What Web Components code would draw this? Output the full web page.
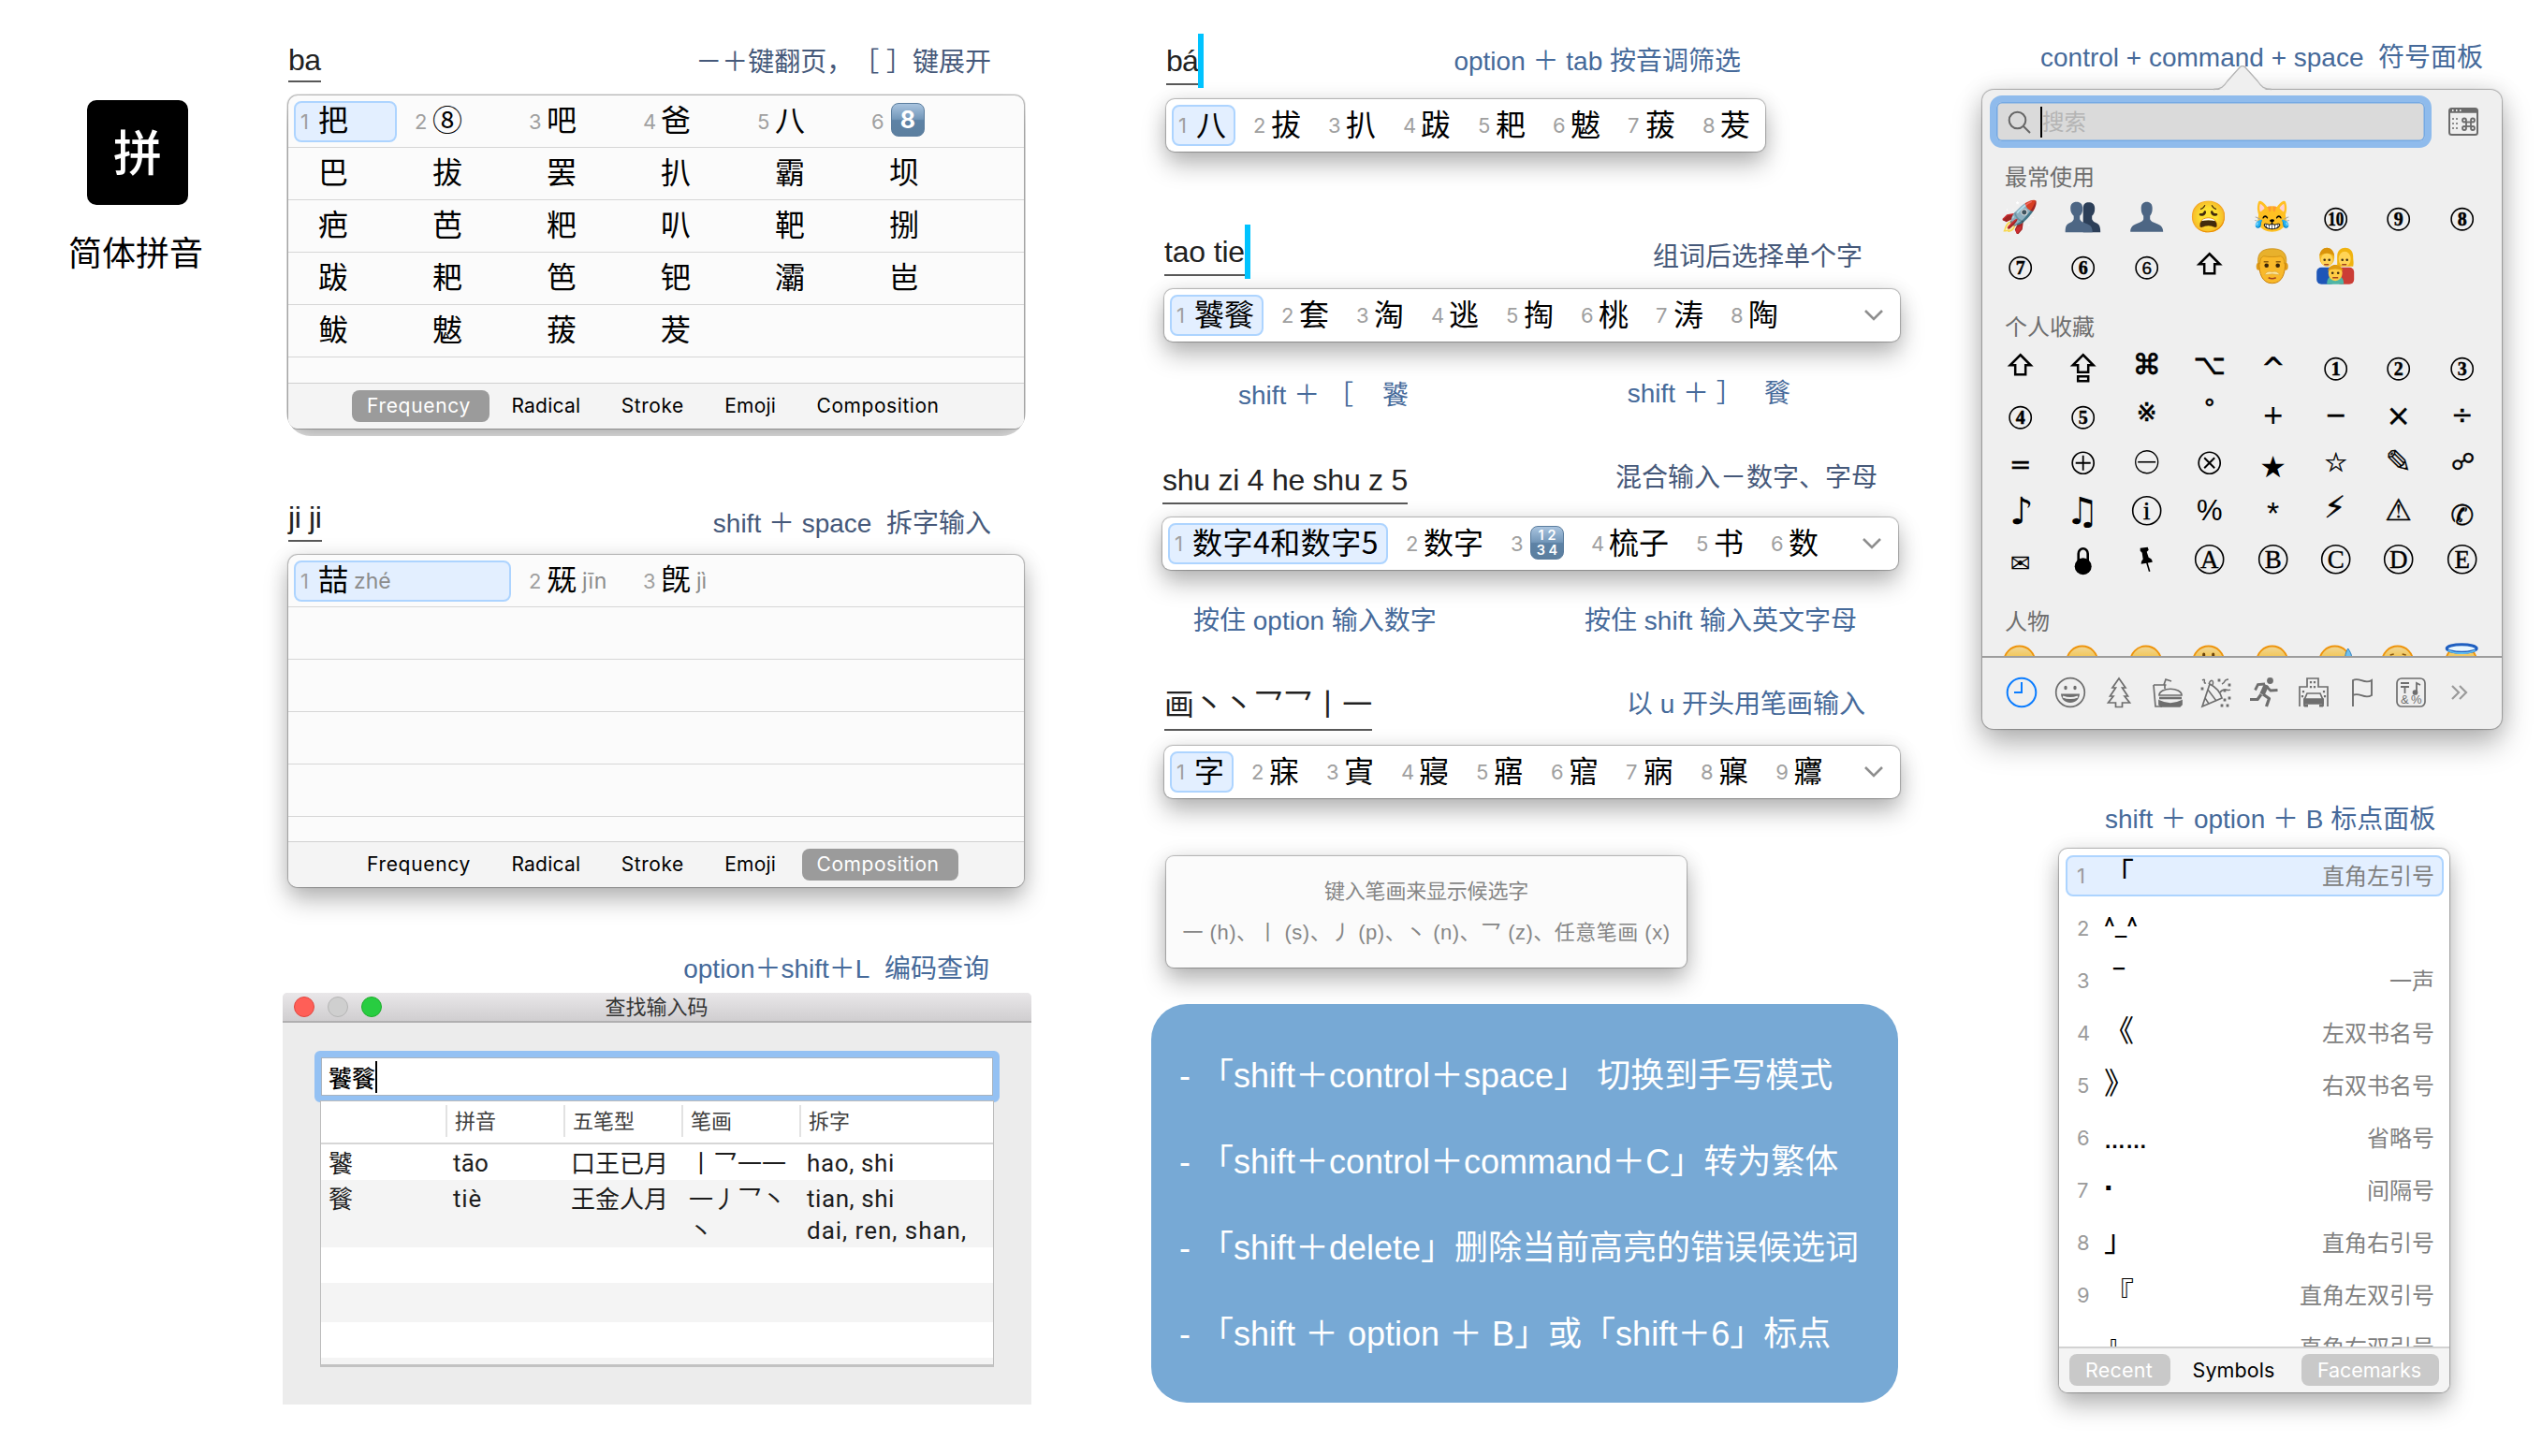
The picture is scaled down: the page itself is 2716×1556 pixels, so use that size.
<!doctype html>
<html lang="zh-CN">
<head>
<meta charset="utf-8">
<title>简体拼音</title>
<style>
html,body{margin:0;background:#fff}
body{width:2716px;height:1556px;overflow:hidden;font-family:"Liberation Sans","Noto Sans CJK SC",sans-serif;text-spacing-trim:space-all;font-kerning:none}
</style>
</head>
<body>
<cheat-sheet></cheat-sheet>
<script>
const CJK='"Noto Sans CJK SC",sans-serif';
const UI='Inter,"Noto Sans CJK SC",sans-serif';

class Base extends HTMLElement{
  connectedCallback(){
    if(this.shadowRoot) return;
    this.attachShadow({mode:'open'}).innerHTML=this.view();
    this.ready&&this.ready();
  }
  a(n,d=''){return this.hasAttribute(n)?this.getAttribute(n):d}
}
const def=(n,c)=>customElements.define(n,c);

/* Text line whose tracking adapts to the width given in w */
class TxLine extends Base{
  view(){return `<style>:host{display:block;white-space:pre;line-height:40px;width:max-content;flex:none}</style><slot></slot>`}
  ready(){
    const w=+this.a('w',0);
    if(!w) return;
    const n=this.getBoundingClientRect().width,c=[...this.textContent].length;
    if(n) this.style.letterSpacing=((w-n)/c)+'px';
  }
}

/* Blue explanation line */
class HintText extends Base{
  view(){return `<style>:host{display:block;flex:none;white-space:pre;font-size:28px;line-height:40px;color:${this.hasAttribute('dark')?'#46597a':'#466a9a'}}</style><slot></slot>`}
}

/* Text being composed, underlined, with optional cyan caret */
class ComposeText extends Base{
  view(){return `<style>:host{display:flex;flex:none;position:relative}
    .u{font-size:32px;line-height:40px;color:#222;white-space:pre;padding-bottom:var(--pb,4px);border-bottom:2px solid #585858}
    .c{position:absolute;right:-6px;top:-9px;width:6px;height:58px;background:#00c3ff}</style>
    <div class="u"><tx-line w="${this.a('w','0')}">${this.textContent}</tx-line></div>${this.hasAttribute('caret')?'<div class="c"></div>':''}`}
}

const keycap=(k)=>`<span class="g key ${k.length>1?'four':''}">${k.length>1?`<b>${k[0]} ${k[1]}</b><b>${k[2]} ${k[3]}</b>`:`<b>${k}</b>`}</span>`;
const candCss=`.it{box-sizing:border-box;display:flex;align-items:center;height:44px;border:2px solid transparent;border-radius:8px;padding:0 8px 0 5px;flex:none}
  .it.on{background:#e3efff;border-color:#add4ff}
  .n{width:19px;font:22px/44px ${UI};color:#a0a0a0;flex:none}
  .g{font:32px/44px ${CJK};color:#000;margin-top:-7px;white-space:pre}
  .p{font:23px/44px ${UI};color:#8c8c8c;margin:1px 0 0 6px}
  .g.key{box-sizing:border-box;margin:-3px 0 0 2px;width:36px;height:36px;border-radius:8px;border:1px solid #5b7d9e;background:linear-gradient(#a9c4df,#7397b9 48%,#5d82a5 52%,#5c7f9f);color:#fff;display:flex;flex-direction:column;align-items:center;justify-content:center;font-family:Inter,sans-serif}
  .key b{font-size:25px;line-height:30px;font-weight:700}.key.four b{font-size:14.5px;line-height:15.5px;font-weight:600}`;
const cand=(t,i,cls='')=>{
  const [ch,py]=t.split('/');
  const g=ch[0]==='#'?keycap(ch.slice(1)):(/\d/.test(ch)&&ch.length>2?`<tx-line class="g" w="199">${ch}</tx-line>`:`<span class="g">${ch}</span>`);
  return `<div class="it ${cls} ${i===0?'on':''}"><span class="n">${i===null?'':i+1}</span>${g}${py?`<span class="p">${py}</span>`:''}</div>`;
};
const panelShadow='box-shadow:0 0 1px 1px rgba(0,0,0,.26),0 14px 26px rgba(0,0,0,.27),0 0 22px rgba(0,0,0,.09)';

/* One-line candidate bar */
class CandidateBar extends Base{
  view(){return `<style>:host{display:flex;box-sizing:border-box;align-items:center;height:56px;border-radius:9px;background:#fff;padding:0 6px 0 6px;gap:12px;${panelShadow}}
    ${candCss}
    svg{margin-left:auto;margin-right:11px}</style>
    ${this.a('items').split('|').map((t,i)=>cand(t,i)).join('')}
    ${this.hasAttribute('more')?'<svg width="22" height="14" viewBox="0 0 22 14"><path d="M2 2l9 9 9-9" fill="none" stroke="#8e8e8e" stroke-width="2.6"/></svg>':''}`}
}

/* Expanded candidate table with sorting tabs */
class CandidatePanel extends Base{
  view(){
    const rows=this.a('rows').split(';'),act=this.a('tab'),wide=this.hasAttribute('wide');
    const ws={Frequency:111,Radical:74,Stroke:67,Emoji:55,Composition:131};
    return `<style>:host{display:flex;flex-direction:column;box-sizing:border-box;width:786px;height:356px;border-radius:10px;background:#fbfbfb;overflow:visible;${panelShadow}}
    ${candCss}
    .r{display:flex;align-items:center;height:55px;border-bottom:1px solid #d6d6d6;padding-left:6px;flex:none}
    .r:first-child{background:#fff;border-radius:10px 10px 0 0}
    .it{width:110px;margin-right:12px}
    .wide .it.on{width:232px}
    .f{flex:1}
    .tabs{display:flex;align-items:center;gap:7.400px;height:48px;background:#f4f4f4;border-top:1px solid #d0d0d0;border-radius:0 0 10px 10px;padding-left:68px}
    .t{height:34px;border-radius:8px;padding:0 20px 0 16px;font:21px/34px ${UI};color:#000}
    .t.on{background:#9b9b9b;color:#fff}
    tx-line{line-height:34px}</style>
    ${rows.map((r,j)=>`<div class="r ${wide?'wide':''}">${r?r.split('|').map((t,i)=>cand(t,j?null:i)).join(''):''}</div>`).join('')}
    <div class="f"></div>
    <div class="tabs">${Object.keys(ws).map(t=>`<div class="t ${t===act?'on':''}"><tx-line w="${ws[t]}">${t}</tx-line></div>`).join('')}</div>`}
}

/* Code lookup window */
class LookupWindow extends Base{
  view(){return `<style>:host{display:flex;flex-direction:column;width:800px;height:440px;background:#ececec;border-radius:5px 5px 0 0}
    .bar{display:flex;align-items:center;height:32px;box-sizing:border-box;background:linear-gradient(#e9e7e9,#d0ced0);border-bottom:2px solid #b0afb0;padding:0 12px;border-radius:5px 5px 0 0}
    .d{box-sizing:border-box;width:22px;height:22px;border-radius:50%;margin-right:14px}
    .t{flex:1;text-align:center;margin-right:109px;font:22px/26px ${CJK};margin-top:-4px;color:#333}
    .in{box-sizing:border-box;margin:30px 34px 0 34px;height:55px;border:7px solid #94c1f3;border-radius:6px;background:#fff;display:flex;align-items:center;padding-left:8px;box-shadow:inset 0 0 0 1px #a9b4c0;flex:none}
    .in span{font:500 25px/40px ${CJK}}
    .in i{width:2px;height:34px;background:#000}
    .tb{box-sizing:border-box;margin:-2px 40px 0 40px;height:285px;border:1px solid #bcbcbc;border-bottom:3px solid #c2c2c2;background:#fff;display:flex;flex-direction:column;overflow:hidden}
    .r{display:grid;grid-template-columns:133px 126px 126px 126px 1fr;flex:none;box-sizing:border-box}
    .h{height:46px;border-bottom:2px solid #d6d6d6;align-items:center}
    .h div{font:22px/31px ${CJK};height:34px;border-left:2px solid #e2e2e2;padding-left:8px;color:#404040;margin-top:-3px}
    .h div:first-child{border:0}
    .b{padding-top:2px}
    .b div{font:26px/34px ${CJK};color:#1d1d1d;padding-left:8px;white-space:pre}
    .g{background:#f4f4f4}.e{height:38px;flex:none}
    tx-line{line-height:34px;font-family:Roboto,sans-serif;font-size:26px;margin-top:1px}tx-line + tx-line{margin-top:0}</style>
    <div class="bar"><div class="d" style="background:#ff5f57;border:1px solid #e2463f"></div><div class="d" style="background:#cfcfcf;border:1px solid #b5b5b5"></div><div class="d" style="background:#28cd41;border:1px solid #1dad2b"></div><div class="t">查找输入码</div></div>
    <div class="in"><span>饕餮</span><i></i></div>
    <div class="tb">
      <div class="r h"><div></div><div>拼音</div><div>五笔型</div><div>笔画</div><div>拆字</div></div>
      <div class="r b" style="height:38px"><div>饕</div><div><tx-line w="38">tāo</tx-line></div><div>口王已月</div><div>丨乛一一</div><div><tx-line w="94">hao, shi</tx-line></div></div>
      <div class="r b g" style="height:72px"><div>餮</div><div><tx-line w="31">tiè</tx-line></div><div>王金人月</div><div>一丿乛丶
丶</div><div><tx-line w="94">tian, shi</tx-line><tx-line w="171">dai, ren, shan,</tx-line></div></div>
      <div class="e"></div><div class="e g" style="height:42px"></div><div class="e"></div><div class="e g"></div>
    </div>`}
}

/* Stroke key legend */
class StrokeLegend extends Base{
  view(){return `<style>:host{display:flex;flex-direction:column;align-items:center;box-sizing:border-box;width:556px;height:119px;border-radius:8px;background:#fbfbfb;padding-top:18px;${panelShadow};font-family:"Liberation Sans","Noto Sans CJK SC",sans-serif;font-size:22px;color:#868686}
    tx-line{line-height:40px}.b{margin-top:4px}</style>
    <tx-line w="218">键入笔画来显示候选字</tx-line><tx-line class="b" w="521">一 (h)、丨 (s)、丿 (p)、丶 (n)、乛 (z)、任意笔画 (x)</tx-line>`}
}

/* Blue list of shortcuts */
class ShortcutCard extends Base{
  view(){return `<style>:host{display:flex;flex-direction:column;box-sizing:border-box;width:798px;height:426px;border-radius:38px;background:#77a9d5;padding:31px 0 0 30px;font-size:36px;color:#fff}
    div{height:92px;line-height:92px;white-space:pre;flex:none}</style>
    ${this.a('lines').split('|').map(l=>`<div>- ${l}</div>`).join('')}`}
}

/* ---- Symbol popover ---- */
const cell=(s)=>`<svg width="67.4" height="51.5" viewBox="-33.7 -25.75 67.4 51.5">${s}</svg>`;
const glyph=(g,size,x,y,font='DejaVu Sans',sw=0)=>cell(`<text x="${x}" y="${y}" font-family="${font},Noto Sans CJK SC,sans-serif" font-size="${size}" text-anchor="middle" ${sw?`stroke="#000" stroke-width="${sw}"`:''}>${g}</text>`);
const circ=(g,dy=2.5,bold=true,r=11.6,size=20,sans=false)=>cell(`<circle cx="0" cy="${dy}" r="${r}" fill="none" stroke="#000" stroke-width="1.6"/><text x="0" y="${dy+size*.34}" font-family="${sans?'Liberation Sans':'Liberation Serif'},serif" font-size="${size}" ${bold?'font-weight="700" stroke="#000" stroke-width=".5"':'stroke="#000" stroke-width=".4"'} text-anchor="middle" ${g.length>1?`textLength="17" lengthAdjust="spacingAndGlyphs"`:''}>${g}</text>`);
const emoji=(e,size=33,x=-1,dy=0)=>glyph(e,size,x,size*.34+dy,'Noto Color Emoji');
const bust=(x,c)=>`<path transform="translate(${x} 0)" d="M-6-9c0-5 2.500-7 6-7s6 2 6 7c0 4-1 6-2.500 8v3.500c1 2.500 3 3 6.500 4.500 5 1.800 7.500 4 7.500 9h-35c0-5 2.500-7.200 7.500-9 3.500-1.500 5.500-2 6.500-4.500v-3.500c-1.500-2-2.500-4-2.500-8z" fill="${c}"/>`;
const busts=`<path transform="translate(6 0)" d="M-6-9c0-5 2.500-6.500 6-6.500s6.500 1.500 6.500 6.500c0 4-1 6-3 8v3.500c1 2.500 2.500 3 5.500 4.500 3 1.800 3.500 5 3.500 9.500h-18.500z" fill="#2c3f58"/><path transform="translate(-7 0)" d="M-6.500-9c0-5 2.500-7 6.500-7s6.500 2 6.500 7c0 4-1 6-3 8v3.500c1 2.500 3 3 6.500 4.500 5 1.800 7 4 7 9.500h-29c0-5 .5-7.700 3.500-9.500 3-1.500 4.500-2 5.500-4.500v-3.500c-2-2-3.500-4-3.500-8z" fill="#4d6684"/>`;
const shift=cell('<path d="M0-12.500L11-1.500H5.500V8.500H-5.500V-1.500H-11Z" fill="none" stroke="#000" stroke-width="2.500"/>');
const caps=cell('<path d="M0-12.500L11-1.500H5.500V6H-5.500V-1.500H-11ZM-5.500 10.500h11v5h-11z" fill="none" stroke="#000" stroke-width="2.500"/>');
const family=cell(`<g transform="translate(-.5 0)"><rect x="-20" y="2" width="20" height="18" rx="5" fill="#1e56b8"/><rect x="1" y="2" width="19" height="18" rx="5" fill="#cb3d36"/>
  <path d="M2-10c0-12 17-12 17 0 0 5 1 7 0 11h-17z" fill="#f0b310"/><ellipse cx="-9" cy="-9" rx="8" ry="10" fill="#f3b71f"/><ellipse cx="10" cy="-7" rx="6.500" ry="8" fill="#ffd456"/><path d="M-17-10c1-12 15-12 16 0-3-4-13-4-16 0z" fill="#d9930b"/><ellipse cx="-9" cy="-6" rx="6.500" ry="7" fill="#ffd456"/>
  <path d="M-9 20c0-8 4-9 9-9s9 1 9 9z" fill="#4fb5a5"/><ellipse cx="0" cy="8" rx="7.500" ry="8.500" fill="#ffcd45"/><path d="M-8 6c1-9 15-9 16 0-4-3-12-3-16 0z" fill="#e09c10"/><g fill="#3d2a10"><circle cx="-11.500" cy="-6" r="1.300"/><circle cx="-6.500" cy="-6" r="1.300"/><circle cx="7.500" cy="-6" r="1.300"/><circle cx="12.500" cy="-6" r="1.300"/><circle cx="-3" cy="8" r="1.300"/><circle cx="3" cy="8" r="1.300"/></g><path d="M-12-1h5M7-1h5M-3 13h6" stroke="#a5441c" stroke-width="1.600"/></g>`);
/* Blond man with a moustache */
const man=cell(`<g transform="translate(-1 1)"><ellipse cx="-14.500" cy="0" rx="2.500" ry="4" fill="#e09c18"/><ellipse cx="14.500" cy="0" rx="2.500" ry="4" fill="#e09c18"/><path d="M-14-4c0-10 6-13 14-13s14 3 14 13c0 11-3 22-14 22s-14-11-14-22z" fill="#f9b92a" stroke="#c97f08" stroke-width="1"/><path d="M-15-4c-1-10 4-15 15-15s16 5 15 15l-2 1c0-6-2-7-4-8-5 1-13 1-18 0-2 1-4 2-4 8z" fill="#e8b12c" stroke="#c98a10" stroke-width=".8"/><circle cx="-6" cy="-1" r="2.300" fill="#3a2508"/><circle cx="6" cy="-1" r="2.300" fill="#3a2508"/><path d="M-9-5h5M4-5h5" stroke="#8f5e0c" stroke-width="1.500"/><path d="M-8 9c2-4 6-4 8-3 2-1 6-1 8 3-3 0-5-1-8-1s-5 1-8 1z" fill="#fbe6a0" stroke="#d9a63c" stroke-width=".6"/><path d="M-4 12c3 1.500 5 1.500 8 0" stroke="#a2431f" stroke-width="1.600" fill="none"/></g>`);
const lock=cell(`<path d="M-5 4V-6a5 5.500 0 0 1 10 0V4" fill="none" stroke="#000" stroke-width="2.600"/><ellipse cx="0" cy="7.500" rx="9" ry="9" fill="#000"/>`);
const pin=cell(`<path d="M-7-12l8-1 1 3-2 2 2 6c3 1 4 3 4 5l-12 2c0-3 1-4 2-5l-1-7-2-2z" fill="#000"/><path d="M0 3l3 10" stroke="#000" stroke-width="1.600"/>`);

class SymbolPopover extends Base{
  view(){
    const ten=(n)=>circ(n);
    const LS='Liberation Sans';
    const recent=[emoji('🚀',33),cell(busts),cell(bust(0,'#4d6684')),emoji('😩',33),emoji('😹',33),ten('10'),ten('9'),ten('8'),
      ten('7'),ten('6'),circ('6',2.5,false,11.6,19,true),shift,man,family];
    const fav=[shift,caps,glyph('⌘',30,0,8.5,'DejaVu Sans',.8),glyph('⌥',30,0,8,'DejaVu Sans',.5),glyph('^',30,0,12.5,'DejaVu Sans',.7),ten('1'),ten('2'),ten('3'),
      ten('4'),ten('5'),glyph('※',26,0,6.5,'DejaVu Sans',.7),glyph('˚',30,0,9,'DejaVu Sans',.4),glyph('+',28,0,9.5,'DejaVu Sans',.2),glyph('−',28,0,9.5,'DejaVu Sans',.4),glyph('×',32,0,11.5,'DejaVu Sans',.3),glyph('÷',28,0,9.5,'DejaVu Sans',.3),
      glyph('=',28,0,11,'DejaVu Sans',.5),cell('<circle cy="0" r="11.500" fill="none" stroke="#000" stroke-width="1.700"/><path d="M-8 0h16M0-8v16" stroke="#000" stroke-width="1.800"/>'),cell('<circle cy="-1" r="12" fill="none" stroke="#000" stroke-width="1.300"/><path d="M-9.500-1h19" stroke="#000" stroke-width="1.600"/>'),cell('<circle cy="0" r="11.500" fill="none" stroke="#000" stroke-width="1.700"/><path d="M-5.500-5.500l11 11M5.500-5.500l-11 11" stroke="#000" stroke-width="2"/>'),glyph('★',32,0,15.5),glyph('☆',28,0,9.5,'DejaVu Sans',.5),glyph('✎',34,0,10.5,'DejaVu Sans',.2),glyph('☍',25,1,7.5,'DejaVu Sans',.4),
      glyph('♪',40,1,13),glyph('♫',40,-1,13),circ('i',-1,false,15,28),glyph('%',31,0,9,LS),glyph('*',34,0,13,LS),glyph('⚡',32,-1,6,'DejaVu Sans',.6),glyph('⚠',32,0,9,'DejaVu Sans',.4),glyph('✆',30,0,14,'DejaVu Sans',.4),
      glyph('✉',26,0,13),lock,pin,circ('A',0,false,15,27),circ('B',0,false,15,27),circ('C',0,false,15,27),circ('D',0,false,15,27),circ('E',0,false,15,27)];
    const face=(x='')=>`<svg width="67.4" height="14" viewBox="-33.7 -3 67.4 14"><circle cx="-1" cy="17" r="16.500" fill="url(#fg)" stroke="#ee940c" stroke-width="1.800"/>${x}</svg>`;
    const eyes='<path d="M-6 13v-4M4 13v-4" stroke="#6b4309" stroke-width="3" stroke-linecap="round"/>';
    const faces=[face(),face(),face(),face(eyes),face(),face('<path d="M10 13c0-5 2-8 3-10 2 3 4 6 4 10z" fill="#6fc0ef" stroke="#2f7fc0"/>'),face('<path d="M-9 10l4-1M4 9l4 1" stroke="#8b5a10" stroke-width="1.500"/>'),face('<ellipse cx="-.5" cy="3" rx="16" ry="4.300" fill="#e9f7ff" stroke="#1f5fc0" stroke-width="3"/><path d="M-15 5c7 4 22 4 29 0" stroke="#62c0f3" fill="none" stroke-width="2"/>')];
    const ic=(s,c='#6e6e6e')=>`<svg width="36" height="40" viewBox="-18 -20 36 40" fill="none" stroke="${c}" stroke-width="1.700">${s}</svg>`;
    const icons=[
      ic('<circle r="15.300" stroke-width="2"/><path d="M0-11v11h-8" stroke-width="2"/>','#0a7cff'),
      ic('<circle r="15.300" /><g fill="#6e6e6e" stroke="none"><ellipse cx="-5" cy="-5" rx="1.700" ry="2.200"/><ellipse cx="5" cy="-5" rx="1.700" ry="2.200"/><path d="M-10 1.500h20c-.5 6-4.500 9.500-10 9.500s-9.500-3.500-10-9.500z"/></g><path d="M-8 4.500c5 2 11 2 16 0" stroke="#efefef" stroke-width="2"/>'),
      ic('<path d="M0-15l7 10h-3.500l6 9h-3.500l5.500 7h-8v4.500h-7v-4.500h-8l5.500-7h-3.500l6-9h-3.500z"/>'),
      ic('<path d="M-15-8h13.500M-15-8l2 23h7M-4-8l2-6 6 2" /><path d="M-9 3c0-9 24-9 24 0z"/><path d="M-9 6h24" stroke-width="2.600"/><path d="M-9 9c8 4 16 4 24 0v4l-2 2h-20l-2-2z" fill="#6e6e6e"/><path d="M-3-8v4"/>'),
      ic('<path d="M-15 15l8-24c6 3 11 8 13 15z"/><path d="M-12 6l4 6M-9-3l9 12M-8-9c2-6 6-4 4 1M4 0c4-6 8-1 11-3M-15-13c5-3 0 4 4 3M6-9c5-2 1-5 7-5" stroke-width="1.500"/><path d="M3-13v.1M14-8v.1M-15-4v.1M9 8v.1M14 6v.1M12 14v.1M6 14v.1M9-2v.1" stroke-width="2.800" stroke-linecap="square"/>'),
      ic('<circle cx="5.500" cy="-12.500" r="3.400" fill="#6e6e6e" stroke="none"/><path d="M-10.500-2.500l3-6 7.500-.5M1-7l5 5 7.500-.500" stroke-width="2.800"/><path d="M-4 2l-4 5.500h-8M-2 2l6.500 4.500-3 8.500" stroke-width="3.200" stroke-linejoin="round"/><path d="M1.500-8l-4.500 10" stroke-width="5.500"/>'),
      ic('<path d="M-15 15V-6h8v-9h12v9h10v21"/><path d="M-10 15v-7l3-7h14l3 7v7"/><path d="M-10 7h20v5h-20z" fill="#6e6e6e"/><path d="M-8 13v2.500M8 13v2.500" stroke-width="4"/><path d="M-3-11v.1M1-11v.1M-3-6v.1M1-6v.1M-11-1v.1M11-1v.1M-12 4v.1M12 4v.1" stroke-width="2.200" stroke-linecap="square"/>'),
      ic('<path d="M-10 15v-28c7-4 12 5 20 0v16c-8 5-13-4-20 0" stroke-width="1.900"/>'),
      ic('<rect x="-15" y="-15" width="30" height="30" rx="5"/><path d="M-11-10h9M-11-6h9M-6.500-6v7M6 0v-10l4 2" stroke-width="1.800"/><circle cx="4.500" cy="0" r="2" fill="#6e6e6e"/><g stroke="none" fill="#6e6e6e" font-family="Liberation Sans" font-size="13"><text x="-11" y="12">&amp;</text><text x="0" y="12">%</text></g>'),
      ic('<path d="M-8-7l7 7-7 7M0-7l7 7-7 7" stroke-width="2.200"/>','#9a9a9a')];
    return `<style>:host{display:block;position:relative;width:555px;height:683px;border-radius:12px;background:#efefef;box-shadow:0 0 1px 1px rgba(0,0,0,.28),0 16px 32px rgba(0,0,0,.28),0 0 26px rgba(0,0,0,.12)}
    .tip{position:absolute;left:247px;top:-26px}
    .col{display:flex;flex-direction:column;height:683px}
    .s{box-sizing:border-box;display:flex;align-items:center;padding:6px 24px 0 8px;height:62px;flex:none;gap:18px}
    .f{box-sizing:border-box;width:472px;height:56px;border:7px solid #8fbbec;border-radius:13px;background:#dadada;box-shadow:inset 0 0 0 1.5px #74a9e4;display:flex;align-items:center;padding-left:12px}
    .f i{width:2px;height:33px;background:#000;margin-left:10px}
    .f span{font:23.500px/40px ${CJK};color:#b4b4b4;margin-top:-2px}
    .h{font:24px/34px ${CJK};color:#6e6e6e;padding-left:24px;flex:none}
    .g{display:flex;flex-wrap:wrap;align-content:flex-start;width:540px;margin-left:7px;flex:none}
    .g svg{flex:none;display:block;overflow:visible}
    .faces{height:14px;overflow:hidden}.faces svg{overflow:hidden}
    .bar{box-sizing:border-box;height:78px;border-top:2px solid #9d9d9d;display:flex;align-items:center;padding:0 0 2px 24px;gap:16px;margin-top:auto;flex:none}</style>
    <svg class="tip" width="62" height="28" viewBox="0 0 62 28"><path d="M0 26.500c8 0 11-3 15-9L28 2c2-2 4-2 6 0l13 15.500c4 6 7 9 15 9V28H0z" fill="#efefef"/><path d="M0 25.500c8 0 11-3 15-9L28 2c2-2 4-2 6 0l13 14.500c4 6 7 9 15 9" fill="none" stroke="#b4b4b4" stroke-width="1.300"/></svg>
    <div class="col">
    <div class="s"><div class="f"><svg width="25" height="25" viewBox="0 0 25 25" fill="none" stroke="#666" stroke-width="2"><circle cx="10.500" cy="10.500" r="8.800"/><path d="M17 17l7 7"/></svg><i></i><span>搜索</span></div>
      <svg width="32" height="30" viewBox="0 0 32 30" fill="none" stroke="#6b6b6b" stroke-width="2"><rect x="1" y="1" width="30" height="28" rx="2.500"/><path d="M1 3.500h30" stroke-width="4.500"/><path d="M4 3h1.500M8 3h1.500M12 3h1.500" stroke="#efefef"/><path d="M4 12h2M8 12h2M4 17h2M8 17h2M4 22h2M8 22h2" stroke-width="1.600"/><g stroke-width="1.800"><rect x="19" y="15.500" width="5" height="4.500"/><circle cx="17" cy="13.500" r="2"/><circle cx="26" cy="13.500" r="2"/><circle cx="17" cy="22" r="2"/><circle cx="26" cy="22" r="2"/></g></svg></div>
    <div class="h" style="margin-top:13px">最常使用</div>
    <div class="g" style="margin-top:1px;height:112px">${recent.join('')}</div>
    <div class="h" style="margin-top:13px;">个人收藏</div>
    <div class="g" style="margin-top:1px;height:257.500px">${fav.join('')}</div>
    <div class="h" style="margin-top:22.500px">人物</div>
    <svg width="0" height="0" style="position:absolute"><defs><linearGradient id="fg" x1="0" y1="0" x2="0" y2="1"><stop offset="0" stop-color="#efd79a"/><stop offset=".5" stop-color="#f4bf3a"/></linearGradient></defs></svg>
    <div class="g faces" style="margin-top:6.500px">${faces.join('')}</div>
    <div class="bar">${icons.join('')}</div></div>`}
}

/* Punctuation list */
class PunctuationPanel extends Base{
  view(){
    const alt={'^_^':'font:28px/40px Roboto;margin-top:-1px','ˉ':'font-weight:600','……':'font:23px/40px Liberation Sans;margin-top:3px;font-weight:700','·':'font:34px/40px Liberation Sans;margin-top:-3px;font-weight:700'};
    return `<style>:host{display:flex;flex-direction:column;width:417px;height:581px;border-radius:9px;background:#fff;${panelShadow}}
    .l{flex:1;overflow:hidden;padding:7px 6px 0 7px;min-height:0}
    .r{box-sizing:border-box;display:flex;height:44px;margin-bottom:12px;border:2px solid transparent;border-radius:8px;padding:0 8px 0 10px}
    .r.on{background:#e3efff;border-color:#add4ff}
    .n{font:22px/40px ${UI};color:#9b9b9b;width:29px}
    .s{font:32px/40px ${CJK};margin-top:-5px;height:40px;white-space:pre;flex:1}
    .d{font:24px/40px ${CJK};color:#808080;margin-top:-1px}
    .f{box-sizing:border-box;display:flex;align-items:center;height:49px;background:#f4f4f4;border-top:2px solid #d2d2d2;border-radius:0 0 9px 9px;padding:0 11px 2px;justify-content:space-between;flex:none}
    .p{height:34px;border-radius:8px;background:#c9c9c9;color:#fff;padding:0 19px 0 17px;font:21.500px/34px ${UI}}
    .p.k{background:none;color:#000;padding:0 13px 0 8px}
    tx-line{line-height:34px}</style>
    <div class="l">${this.a('items').split('|').map((t,i)=>{const[s,d]=t.split('~');return `<div class="r ${i?'':'on'}"><span class="n">${i<9?i+1:''}</span><span class="s" style="${alt[s]||''}">${s}</span><span class="d">${d||''}</span></div>`}).join('')}</div>
    <div class="f"><div class="p"><tx-line w="72">Recent</tx-line></div><div class="p k"><tx-line w="88">Symbols</tx-line></div><div class="p"><tx-line w="111">Facemarks</tx-line></div></div>`}
}

/* App badge */
class AppBadge extends Base{
  view(){return `<style>:host{display:flex;flex-direction:column;align-items:center;width:220px}
    .i{width:108px;height:112px;border-radius:10px;background:#000;color:#fff;font:500 52px/107px ${CJK};text-align:center}
    .t{font:36px/50px ${CJK};margin:24px 4px 0 0;color:#000}</style><div class="i">拼</div><div class="t">简体拼音</div>`}
}

/* Whole sheet: badge and three columns */
class CheatSheet extends Base{
  view(){return `<style>:host{display:flex;width:2716px;height:1556px;background:#fff}
    .c{display:flex;flex-direction:column;flex:none}
    .r{display:flex;flex:none;align-items:flex-start;justify-content:space-between;box-sizing:border-box}
    candidate-bar,candidate-panel,stroke-legend,shortcut-card,symbol-popover,punctuation-panel,lookup-window{flex:none}
    .clip{clip-path:inset(-2px -2px -8px -2px round 12px 12px 26px 26px)}</style>
  <div class="c" style="width:302px;padding:107px 0 0 37px;box-sizing:border-box"><app-badge></app-badge></div>
  <div class="c" style="width:928px">
    <div class="r" style="height:102px;padding:36px 171px 0 6px"><compose-text w="34.500" style="margin-top:8px;--pb:2px">ba</compose-text><hint-text dark style="margin-top:11px">－＋键翻页，［ ］键展开</hint-text></div>
    <candidate-panel class="clip" style="margin-left:6px" tab="Frequency" rows="把|⑧|吧|爸|八|#8;巴|拔|罢|扒|霸|坝;疤|芭|粑|叭|靶|捌;跋|耙|笆|钯|灞|岜;鲅|魃|菝|茇"></candidate-panel>
    <div class="r" style="height:135px;padding:75px 171px 0 6px"><compose-text w="35.500" style="--pb:4px">ji ji</compose-text><hint-text dark style="margin-top:7px">shift ＋ space  拆字输入</hint-text></div>
    <candidate-panel wide style="margin-left:6px;height:355px" tab="Composition" rows="喆/zhé|兓/jīn|旣/jì;;;;"></candidate-panel>
    <div class="r" style="height:113px;padding:68px 173px 0 0;justify-content:flex-end"><hint-text>option＋shift＋L  编码查询</hint-text></div>
    <lookup-window></lookup-window>
  </div>
  <div class="c" style="width:888px">
    <div class="r" style="height:106px;padding:45px 258px 0 16px"><compose-text caret w="34">bá</compose-text><hint-text style="margin-top:1px">option ＋ tab 按音调筛选</hint-text></div>
    <candidate-bar style="margin-left:16px;width:640px" items="八|拔|扒|跋|耙|魃|菝|茇"></candidate-bar>
    <div class="r" style="height:147px;padding:87px 128px 0 14px"><compose-text caret w="86">tao tie</compose-text><hint-text dark style="margin-top:6px">组词后选择单个字</hint-text></div>
    <candidate-bar more style="margin-left:14px;width:786px" items="饕餮|套|淘|逃|掏|桃|涛|陶"></candidate-bar>
    <div class="r" style="height:128px;padding:38px 205px 0 93px"><hint-text>shift ＋ ［    饕</hint-text><hint-text style="margin-right:0;margin-top:-2px">shift ＋ ］   餮</hint-text></div>
    <div class="r" style="height:60px;padding:0 112px 0 12px"><compose-text w="262">shu zi 4 he shu z 5</compose-text><hint-text dark style="margin-top:-2px">混合输入－数字、字母</hint-text></div>
    <candidate-bar more style="margin-left:12px;width:786px" items="数字4和数字5|数字|#1234|梳子|书|数"></candidate-bar>
    <div class="r" style="height:123px;padding:35px 134px 0 45px"><hint-text>按住 option 输入数字</hint-text><hint-text>按住 shift 输入英文字母</hint-text></div>
    <div class="r" style="height:65px;padding:1px 125px 0 14px"><compose-text w="222" style="--pb:6px">画丶丶乛乛丨一</compose-text><hint-text>以 u 开头用笔画输入</hint-text></div>
    <candidate-bar more style="margin-left:14px;width:786px" items="字|寐|寊|寢|寤|寣|寎|寱|㝲"></candidate-bar>
    <stroke-legend style="margin:62px 0 0 16px"></stroke-legend>
    <shortcut-card style="margin-top:39px" lines="「shift＋control＋space」 切换到手写模式|「shift＋control＋command＋C」转为繁体|「shift＋delete」删除当前高亮的错误候选词|「shift ＋ option ＋ B」或「shift＋6」标点"></shortcut-card>
  </div>
  <div class="c" style="width:598px">
    <div class="r" style="height:96px;padding:42px 0 0 62px"><hint-text>control + command + space  符号面板</hint-text></div>
    <symbol-popover></symbol-popover>
    <div class="r" style="height:128px;padding:77px 0 0 131px"><hint-text>shift ＋ option ＋ B 标点面板</hint-text></div>
    <punctuation-panel style="margin-left:82px" items="「~直角左引号|^_^|ˉ~一声|《~左双书名号|》~右双书名号|……~省略号|·~间隔号|」~直角右引号|『~直角左双引号|』~直角右双引号"></punctuation-panel>
  </div>`}
}

def('tx-line',TxLine);def('hint-text',HintText);def('compose-text',ComposeText);def('candidate-bar',CandidateBar);
def('candidate-panel',CandidatePanel);def('lookup-window',LookupWindow);def('stroke-legend',StrokeLegend);
def('shortcut-card',ShortcutCard);def('symbol-popover',SymbolPopover);def('punctuation-panel',PunctuationPanel);
def('app-badge',AppBadge);def('cheat-sheet',CheatSheet);
</script>
</body>
</html>
